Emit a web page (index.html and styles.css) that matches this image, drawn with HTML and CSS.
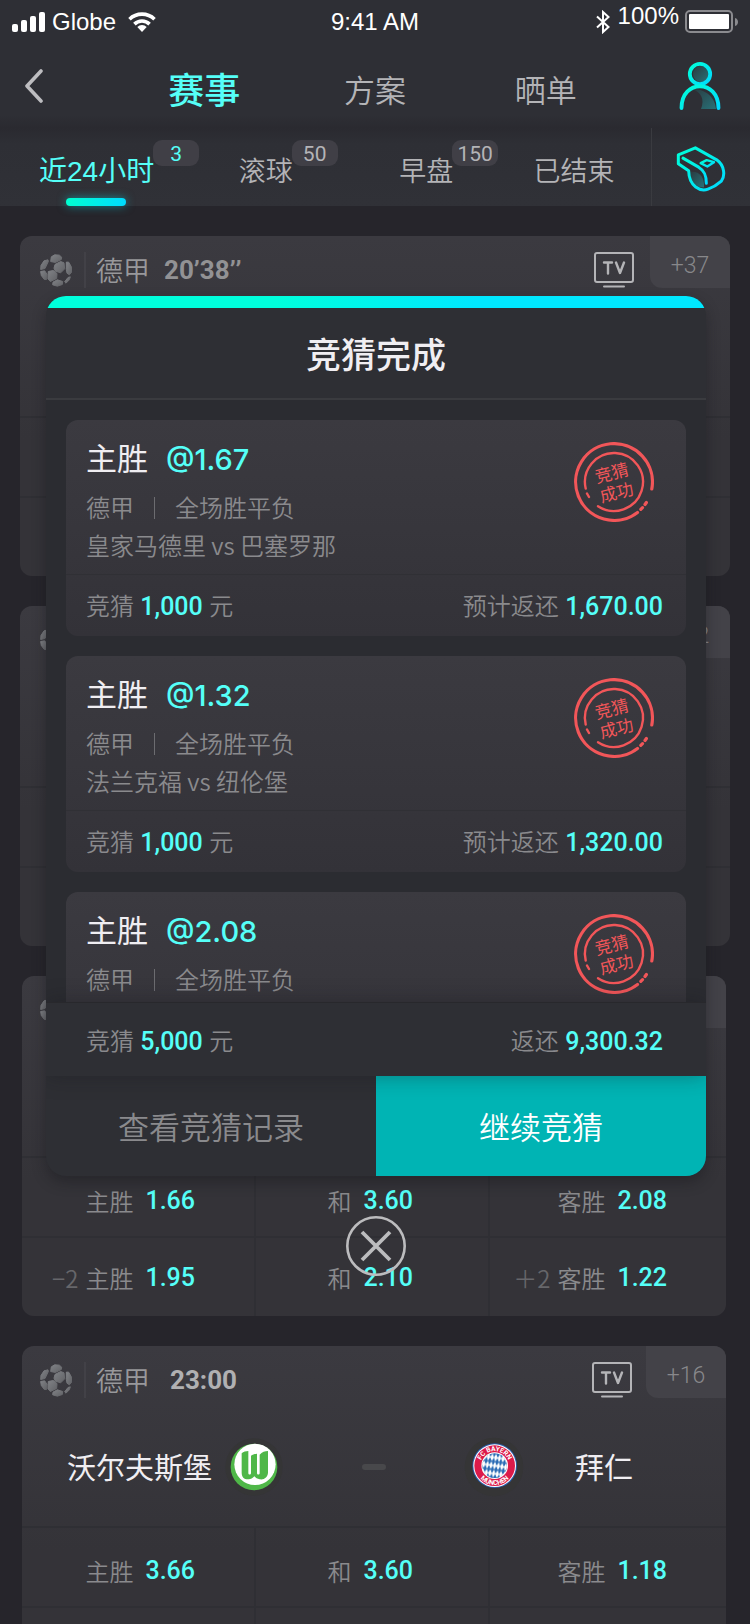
FILE: index.html
```html
<!DOCTYPE html>
<html lang="zh-CN">
<head>
<meta charset="utf-8">
<meta name="viewport" content="width=device-width, initial-scale=1">
<title>竞猜完成</title>
<link rel="stylesheet" href="styles.css">
</head>
<body>
<svg class="defs" aria-hidden="true">
  <defs>
    <linearGradient id="aqua" x1="0" y1="0" x2="1" y2="1">
      <stop offset="0" stop-color="#00ffd8"/><stop offset="1" stop-color="#00d9ff"/>
    </linearGradient>
    <linearGradient id="shade" x1="0" y1="0" x2="1" y2="1">
      <stop offset="0" stop-color="#2a3b40"/><stop offset="1" stop-color="#287178"/>
    </linearGradient>
    <linearGradient id="ballfill" x1="0" y1="0" x2="1" y2="1">
      <stop offset="0" stop-color="#808286"/><stop offset="1" stop-color="#616266"/>
    </linearGradient>
    <pattern id="lozenge" width="11" height="24" patternUnits="userSpaceOnUse" patternTransform="rotate(8)">
      <rect width="11" height="24" fill="#fff"/>
      <path d="M5.500 0L11 12L5.500 24L0 12Z" fill="#2a6cb5"/>
    </pattern>
    <path id="arc-top" d="M-44 0A44 44 0 0 1 44 0"/>
    <path id="arc-bottom" d="M-58 0A58 58 0 0 0 58 0"/>
  </defs>
  <symbol id="ball" viewBox="0 0 96 98">
    <g fill="url(#ballfill)" stroke="url(#ballfill)" stroke-width="3" stroke-linejoin="round">
      <path d="M34 8L44 2L58 3L65 9L64 16L46 25L32 22Z"/>
      <path d="M12 20L24 17L25 22L15 43L2 46L3 34Z"/>
      <path d="M45 31L62 22L72 26L74 44L62 56L46 51L42 42Z"/>
      <path d="M79 24L86 24L94 38L95 54L88 62L81 57L79 46Z"/>
      <path d="M2 52L14 50L21 60L20 76L13 76L4 64Z"/>
      <path d="M25 52L40 49L51 58L50 73L31 82L24 74Z"/>
      <path d="M39 84L52 77L68 82L67 91L52 96L38 92Z"/>
      <path d="M74 83L84 70L91 68L88 77L78 87Z"/>
    </g>
  </symbol>
  <symbol id="tv" viewBox="0 0 40 36">
    <g fill="none" stroke="#b4b4b7" stroke-width="2" stroke-linecap="round">
      <rect x="1" y="1" width="38" height="29" rx="2"/>
      <path d="M10 34.500H30"/>
      <path stroke-width="2.400" stroke-linejoin="round" d="M10 10.500H18M14 10.500V21.500M22 10.500L26 21L30 10.500"/>
    </g>
  </symbol>
  <symbol id="rings" viewBox="-40 -40 80 80">
    <g fill="none" stroke="#f25659" stroke-linecap="round">
      <path stroke-width="3.200" d="M37.800 7A38.400 38.400 0 1 0 23.500 30.400M32.400 20.500L31 22.500M28.500 25.700L26.800 27.300"/>
      <path stroke-width="2.400" d="M-28.300 6.500A29 29 0 1 1 -16 24.200M-27 11.500L-25 15"/>
    </g>
  </symbol>
</svg>

<div class="screen">
  <header class="top">
    <div class="status">
      <div class="status-left">
        <svg width="34" height="21" viewBox="0 0 34 21" fill="#fff" aria-hidden="true"><rect x="0" y="12" width="6" height="8" rx="2"/><rect x="9" y="8" width="6" height="12" rx="2"/><rect x="18" y="4" width="6" height="16" rx="2"/><rect x="27" y="0" width="6" height="20" rx="2"/></svg>
        <span>Globe</span>
        <svg class="wifi" width="28" height="20" viewBox="0 0 28 20" aria-hidden="true"><g fill="none" stroke="#fff" stroke-width="3.600"><path d="M1.500 7.200A18 18 0 0 1 26.500 7.200"/><path d="M6.400 12.100A11 11 0 0 1 21.600 12.100"/></g><path fill="#fff" d="M9.300 15A6.800 6.800 0 0 1 18.700 15L14 20Z"/></svg>
      </div>
      <span>9:41 AM</span>
      <div class="status-right">
        <svg width="14" height="24" viewBox="0 0 14 24" fill="none" stroke="#fff" stroke-width="2" aria-hidden="true"><path d="M1 6.500L12.500 17L7 22V2L12.500 7L1 17.500"/></svg>
        <span class="percent">100%</span>
        <svg width="53" height="24" viewBox="0 0 53 24" aria-hidden="true"><rect x="1" y="1" width="46" height="21" rx="4" fill="none" stroke="#8b8b8f" stroke-width="2"/><rect x="4" y="4" width="40" height="15" rx="1" fill="#fff"/><path d="M50 8C54 9 54 15 50 16Z" fill="#8b8b8f"/></svg>
      </div>
    </div>
    <nav class="nav">
      <button class="nav-back" aria-label="返回"><svg width="18" height="34" viewBox="0 0 18 34" fill="none" stroke="#bdbdc0" stroke-width="3.600" stroke-linecap="round" stroke-linejoin="round"><path d="M16 2L2 17L16 32"/></svg></button>
      <a class="nav-tab nav-tab-on" href="#matches">赛事</a>
      <a class="nav-tab" href="#plans">方案</a>
      <a class="nav-tab" href="#slips">晒单</a>
      <button class="nav-user" aria-label="我的"><svg width="42" height="50" viewBox="0 0 42 50"><circle cx="22" cy="13" r="8" fill="url(#shade)"/><path fill="url(#shade)" d="M13 28C20 27 36 32 37 48H22C26 38 22 31 13 28Z"/><g fill="none" stroke="url(#aqua)" stroke-width="3.800" stroke-linecap="round"><circle cx="21" cy="13" r="10.200"/><path d="M2.500 47C2.500 18 39.500 18 39.500 47"/></g></svg></button>
    </nav>
    <div class="filter">
      <div class="filter-tabs">
        <a class="filter-tab filter-tab-on" href="#day">近24小时<span class="badge">3</span></a>
        <a class="filter-tab" href="#live">滚球<span class="badge">50</span></a>
        <a class="filter-tab" href="#early">早盘<span class="badge">150</span></a>
        <a class="filter-tab" href="#ended">已结束</a>
      </div>
      <button class="filter-more" aria-label="哨子"><svg width="50" height="47" viewBox="900 435 150 140"><path fill="url(#shade)" d="M943 515C970 512 986 530 984 562C958 562 944 545 943 515Z"/><g fill="none" stroke="url(#aqua)" stroke-width="9" stroke-linejoin="round" stroke-linecap="round"><path d="M907 464L958 443L1022 479C1046 496 1048 527 1036 543C1026 552 1010 562 996 567C974 575 939 560 938 512L907 491Z"/><path d="M921 474L968 501C986 512 991 526 991 549"/><path stroke-width="7" d="M974 489L992 480L1014 486L994 499Z"/></g></svg></button>
    </div>
  </header>

  <main class="matches">
    <section class="match match-wide">
      <div class="match-info">
        <div class="match-head">
          <svg class="ball"><use href="#ball"/></svg>
          <span class="league">德甲</span><span class="clock clock-live">20’38’’</span>
          <svg class="tv"><use href="#tv"/></svg><a class="more" href="#more">+37</a>
        </div>
      </div>
      <div class="odds"></div><div class="odds"></div>
    </section>
    <section class="match match-wide">
      <div class="match-info">
        <div class="match-head"><svg class="ball"><use href="#ball"/></svg><a class="more" href="#more">+42</a></div>
      </div>
      <div class="odds"></div><div class="odds"></div>
    </section>
    <section class="match">
      <div class="match-info">
        <div class="match-head"><svg class="ball"><use href="#ball"/></svg><span class="more"></span></div>
      </div>
      <div class="odds">
        <button class="odd">主胜<b>1.66</b></button>
        <button class="odd">和<b>3.60</b></button>
        <button class="odd">客胜<b>2.08</b></button>
      </div>
      <div class="odds odds-handicap">
        <button class="odd"><i>−2</i>主胜<b>1.95</b></button>
        <button class="odd">和<b>2.10</b></button>
        <button class="odd"><i>＋2</i>客胜<b>1.22</b></button>
      </div>
    </section>
    <section class="match">
      <div class="match-info">
        <div class="match-head">
          <svg class="ball"><use href="#ball"/></svg>
          <span class="league">德甲</span><span class="clock">23:00</span>
          <svg class="tv"><use href="#tv"/></svg><a class="more" href="#more">+16</a>
        </div>
        <div class="teams">
          <div class="team team-home"><span>沃尔夫斯堡</span>
            <svg class="crest" viewBox="-90 -90 180 180" role="img" aria-label="沃尔夫斯堡"><circle r="86" fill="#353536"/><circle r="70" fill="#4fb748"/><circle cx="3" cy="-8" r="62" fill="#fff"/><path fill="#4fb748" d="M-37 -41C-32 -46 -24 -48 -17 -48V18C-17 24 -9 24 -9 18V-34C-4 -38 4 -40 9 -40V18C9 24 17 24 17 18V-37C24 -45 33 -48 42 -48V16C42 32 30 39 17 37C10 36 5 32 1 28C-4 34 -10 37 -16 37C-29 38 -37 30 -37 17Z"/></svg>
          </div>
          <span class="dash"></span>
          <div class="team team-away">
            <svg class="crest" viewBox="-90 -90 180 180" role="img" aria-label="拜仁"><circle r="88" fill="#353536"/><g transform="translate(2 -4)"><circle r="67" fill="#2a5ca8"/><circle r="64" fill="#fff"/><circle r="61" fill="#dc1a4a"/><circle r="40" fill="#fff"/><circle r="37" fill="url(#lozenge)"/><g class="crest-text"><text><textPath href="#arc-top" startOffset="50%">FC BAYERN</textPath></text><text><textPath href="#arc-bottom" startOffset="50%">MÜNCHEN</textPath></text></g></g></svg>
            <span>拜仁</span>
          </div>
        </div>
      </div>
      <div class="odds">
        <button class="odd">主胜<b>3.66</b></button>
        <button class="odd">和<b>3.60</b></button>
        <button class="odd">客胜<b>1.18</b></button>
      </div>
      <div class="odds"><span class="odd"></span><span class="odd"></span><span class="odd"></span></div>
    </section>
  </main>

  <div class="overlay">
    <section class="dialog" role="dialog" aria-labelledby="dialog-title">
      <h1 class="dialog-title" id="dialog-title">竞猜完成</h1>
      <div class="bets">
        <article class="bet">
          <div class="bet-main">
            <div>
              <h2 class="bet-pick">主胜<span>@1.67</span></h2>
              <p class="bet-meta"><span>德甲</span><span>全场胜平负</span></p>
              <p class="bet-teams">皇家马德里 vs 巴塞罗那</p>
            </div>
            <div class="stamp"><svg><use href="#rings"/></svg><p>竞猜<br>成功</p></div>
          </div>
          <p class="sum bet-sum"><span>竞猜 <b>1,000</b> 元</span><span>预计返还 <b>1,670.00</b></span></p>
        </article>
        <article class="bet">
          <div class="bet-main">
            <div>
              <h2 class="bet-pick">主胜<span>@1.32</span></h2>
              <p class="bet-meta"><span>德甲</span><span>全场胜平负</span></p>
              <p class="bet-teams">法兰克福 vs 纽伦堡</p>
            </div>
            <div class="stamp"><svg><use href="#rings"/></svg><p>竞猜<br>成功</p></div>
          </div>
          <p class="sum bet-sum"><span>竞猜 <b>1,000</b> 元</span><span>预计返还 <b>1,320.00</b></span></p>
        </article>
        <article class="bet">
          <div class="bet-main">
            <div>
              <h2 class="bet-pick">主胜<span>@2.08</span></h2>
              <p class="bet-meta"><span>德甲</span><span>全场胜平负</span></p>
            </div>
            <div class="stamp"><svg><use href="#rings"/></svg><p>竞猜<br>成功</p></div>
          </div>
        </article>
      </div>
      <p class="sum total"><span>竞猜 <b>5,000</b> 元</span><span>返还 <b>9,300.32</b></span></p>
      <div class="actions">
        <button class="action">查看竞猜记录</button>
        <button class="action action-main">继续竞猜</button>
      </div>
    </section>
    <button class="close" aria-label="关闭"><svg width="60" height="60" viewBox="0 0 60 60" fill="none" stroke="#bcbcbe"><circle cx="30" cy="30" r="28.700" stroke-width="2.600"/><path stroke-width="3.800" d="M16 16L44 44M44 16L16 44"/></svg></button>
  </div>
</div>
</body>
</html>
```
FILE: styles.css
```css
* { box-sizing: border-box; }

body {
  margin: 0;
  background: #26252b;
  color: #8a8a8d;
  font: 350 24px/1.5 "Noto Sans CJK SC", sans-serif;
}

button {
  margin: 0;
  padding: 0;
  border: 0;
  background: none;
  color: inherit;
  font: inherit;
}

a { color: inherit; text-decoration: none; }
h1, h2, p { margin: 0; }
svg { display: block; flex: none; }
b, i { font-style: normal; }
.defs { position: absolute; width: 0; height: 0; }

.screen {
  position: relative;
  height: 100vh;
  overflow: hidden;
}

/* Top bars */
.top { background: #2e2f35; }

.status {
  display: grid;
  grid-template-columns: 1fr auto 1fr;
  align-items: center;
  height: 40px;
  padding: 2px 12px 0 12px;
  color: #fff;
  font: 24px/28px "Liberation Sans", sans-serif;
}
.status-left, .status-right { display: flex; align-items: center; gap: 6px; }
.status-right { justify-content: flex-end; }
.status-right .percent { padding-bottom: 12px; margin-left: 2px; }
.wifi { margin-left: 6px; }

.nav {
  display: flex;
  align-items: center;
  height: 88px;
  background: linear-gradient(#2e2f35 85%, #2a2a30);
}
.nav-back, .nav-user { width: 119px; height: 88px; display: flex; align-items: center; padding-top: 4px; }
.nav-back { padding-left: 25px; }
.nav-user { justify-content: flex-end; padding-right: 29px; }
.nav-tab {
  flex: 1;
  padding-top: 10px;
  color: #b4b4b7;
  font-size: 31px;
  line-height: 40px;
  text-align: center;
}
.nav-tab-on { padding-top: 7px; color: #55fff8; font-size: 36px; font-weight: 500; }

.filter {
  display: flex;
  height: 78px;
  padding-left: 39px;
  background: linear-gradient(#2a2a30, #2e2f35 20%, #303137);
}
.filter-tabs {
  flex: 1;
  display: grid;
  grid-template-columns: 199fr 160fr 134fr 117fr;
  align-items: end;
}
.filter-tab {
  position: relative;
  display: flex;
  height: 65px;
  padding-top: 11px;
  color: #b4b4b7;
  font: 350 27px/40px "Liberation Sans", "Noto Sans CJK SC", sans-serif;
}
.filter-tab-on { color: #55fff8; font-size: 28px; font-weight: 400; }
.filter-tab-on::after {
  content: "";
  position: absolute;
  left: 27px;
  bottom: 0;
  width: 60px;
  height: 8px;
  border-radius: 4px;
  background: linear-gradient(90deg, #00ffd0, #00dcff);
  box-shadow: 0 0 10px rgba(0, 230, 240, .5);
}
.badge {
  width: 46px;
  height: 26px;
  margin: -12px 0 0 -1px;
  border-radius: 9px;
  background: #403f46;
  font: 21px/28px Roboto, sans-serif;
  text-align: center;
}
.filter-more {
  display: flex;
  align-items: center;
  justify-content: center;
  width: 99px;
  border-left: 1px solid #3a3b40;
  padding-top: 3px;
}

/* Match list */
.matches {
  display: flex;
  flex-direction: column;
  gap: 30px;
  padding: 30px 24px 0 22px;
}
.match {
  border-radius: 12px;
  background: linear-gradient(#3b3a40, #343338 60%, #343338);
  overflow: hidden;
}
.match-wide { margin: 0 -4px 0 -2px; }
.match-info { height: 180px; }
.match-head {
  display: flex;
  align-items: center;
  height: 68px;
  padding-left: 18px;
}
.match-wide .match-head { padding-left: 20px; }
.ball { width: 32px; height: 33px; }
.league {
  margin-left: 12px;
  padding-left: 10px;
  border-left: 2px solid #424147;
  color: #98989b;
  font-size: 27px;
  line-height: 36px;
}
.clock {
  margin-left: 20px;
  color: #b0b0b2;
  font: 700 26px/36px Roboto, sans-serif;
  font-kerning: none;
}
.clock-live { margin-left: 14px; color: #929294; }
.tv { width: 40px; height: 36px; margin-left: auto; }
.more {
  align-self: flex-start;
  width: 80px;
  height: 52px;
  margin-left: auto;
  border-bottom-left-radius: 12px;
  background: #434248;
  color: #88888b;
  font: 300 23px/60px Roboto, sans-serif;
  text-align: center;
}
.tv + .more { margin-left: 14px; }
.match-wide .tv + .more { margin-left: 16px; }

.teams {
  display: flex;
  align-items: center;
  height: 106px;
  color: #f0eef2;
  font-size: 29px;
  font-weight: 400;
}
.team { flex: 1; display: flex; align-items: center; }
.team-home { justify-content: flex-end; gap: 12px; }
.team-away { gap: 51px; }
.crest { width: 60px; height: 60px; }
.crest-text {
  fill: #fff;
  font: 700 20px Roboto, sans-serif;
  text-anchor: middle;
}
.dash {
  width: 24px;
  height: 6px;
  margin: 0 78px;
  border-radius: 3px;
  background: #48484b;
}

.odds {
  display: grid;
  grid-template-columns: 232fr 236fr 236fr;
  height: 80px;
  border-top: 2px solid #2f2f34;
}
.odd {
  display: flex;
  align-items: center;
  justify-content: flex-end;
  padding: 7px 59px 0 0;
}
.odds-handicap .odd { padding-top: 2px; }
.odd:nth-child(2) {
  padding-right: 75px;
  border: solid #2f2f34;
  border-width: 0 2px;
}
.odd b {
  margin-left: 12px;
  color: #55fff8;
  font: 500 25px/36px Roboto, sans-serif;
}
.odd i { margin-right: 7px; color: #66666a; }

/* Result dialog */
.overlay {
  position: absolute;
  inset: 296px 44px auto 46px;
  display: flex;
  flex-direction: column;
  align-items: center;
  gap: 40px;
}
.dialog {
  align-self: stretch;
  border-radius: 20px;
  background: #2e2f34;
  box-shadow: 0 6px 14px rgba(20, 20, 26, .4);
  overflow: hidden;
}
.dialog::before {
  content: "";
  display: block;
  height: 12px;
  background: linear-gradient(100deg, #00ffdc 35%, #00e8ff 65%);
}
.dialog-title {
  border-bottom: 2px solid #3a3b3f;
  color: #f0eef2;
  font-size: 35px;
  font-weight: 500;
  line-height: 90px;
  text-align: center;
}
.bets {
  display: flex;
  flex-direction: column;
  gap: 20px;
  height: 602px;
  padding: 20px 20px 0;
  background: #2b2c31;
  overflow: hidden;
}
.bet {
  flex: none;
  height: 216px;
  border-radius: 12px;
  background: linear-gradient(#3b3a40, #333238);
}
.bet-main {
  display: flex;
  justify-content: space-between;
  height: 154px;
  padding: 15px 32px 0 20px;
}
.bet-pick {
  color: #f0eef2;
  font-size: 31px;
  font-weight: 400;
  line-height: 44px;
}
.bet-pick span {
  margin-left: 18px;
  color: #55fff8;
  font-family: Inter, sans-serif;
  font-size: 29px;
  font-weight: 500;
}
.bet-meta { display: flex; align-items: center; padding-top: 6px; line-height: 38px; }
.bet-meta span + span { margin-left: 41px; }
.bet-meta span:first-child::after {
  content: "";
  position: absolute;
  width: 1px;
  height: 22px;
  margin: 9px 0 0 20px;
  background: #6c6c70;
}
.bet-teams { line-height: 38px; }
.stamp {
  display: grid;
  place-items: center;
  align-self: flex-start;
  margin-top: 7px;
  color: #f25659;
}
.stamp > * { grid-area: 1 / 1; }
.stamp svg { width: 80px; height: 80px; }
.stamp p {
  font-size: 17px;
  font-weight: 400;
  line-height: 20px;
  transform: rotate(-14deg);
}

.sum {
  display: flex;
  align-items: center;
  justify-content: space-between;
}
.sum b {
  margin: 0 1px;
  color: #55fff8;
  font: 500 25px/36px Roboto, sans-serif;
}
.bet-sum { height: 62px; padding: 0 22px 0 20px; border-top: 1px solid #303035; }
.total {
  position: relative;
  height: 74px;
  padding: 2px 42px 0 40px;
  background: #2e2f34;
  border-top: 1px solid #28282c;
  box-shadow: 0 0 20px rgba(20, 20, 26, .35);
}
.actions { display: flex; height: 100px; }
.action { flex: 1; color: #8a8a8d; font-size: 31px; }
.action-main { background: #00b4b4; color: #fff; }
.close { border-radius: 50%; }
```
